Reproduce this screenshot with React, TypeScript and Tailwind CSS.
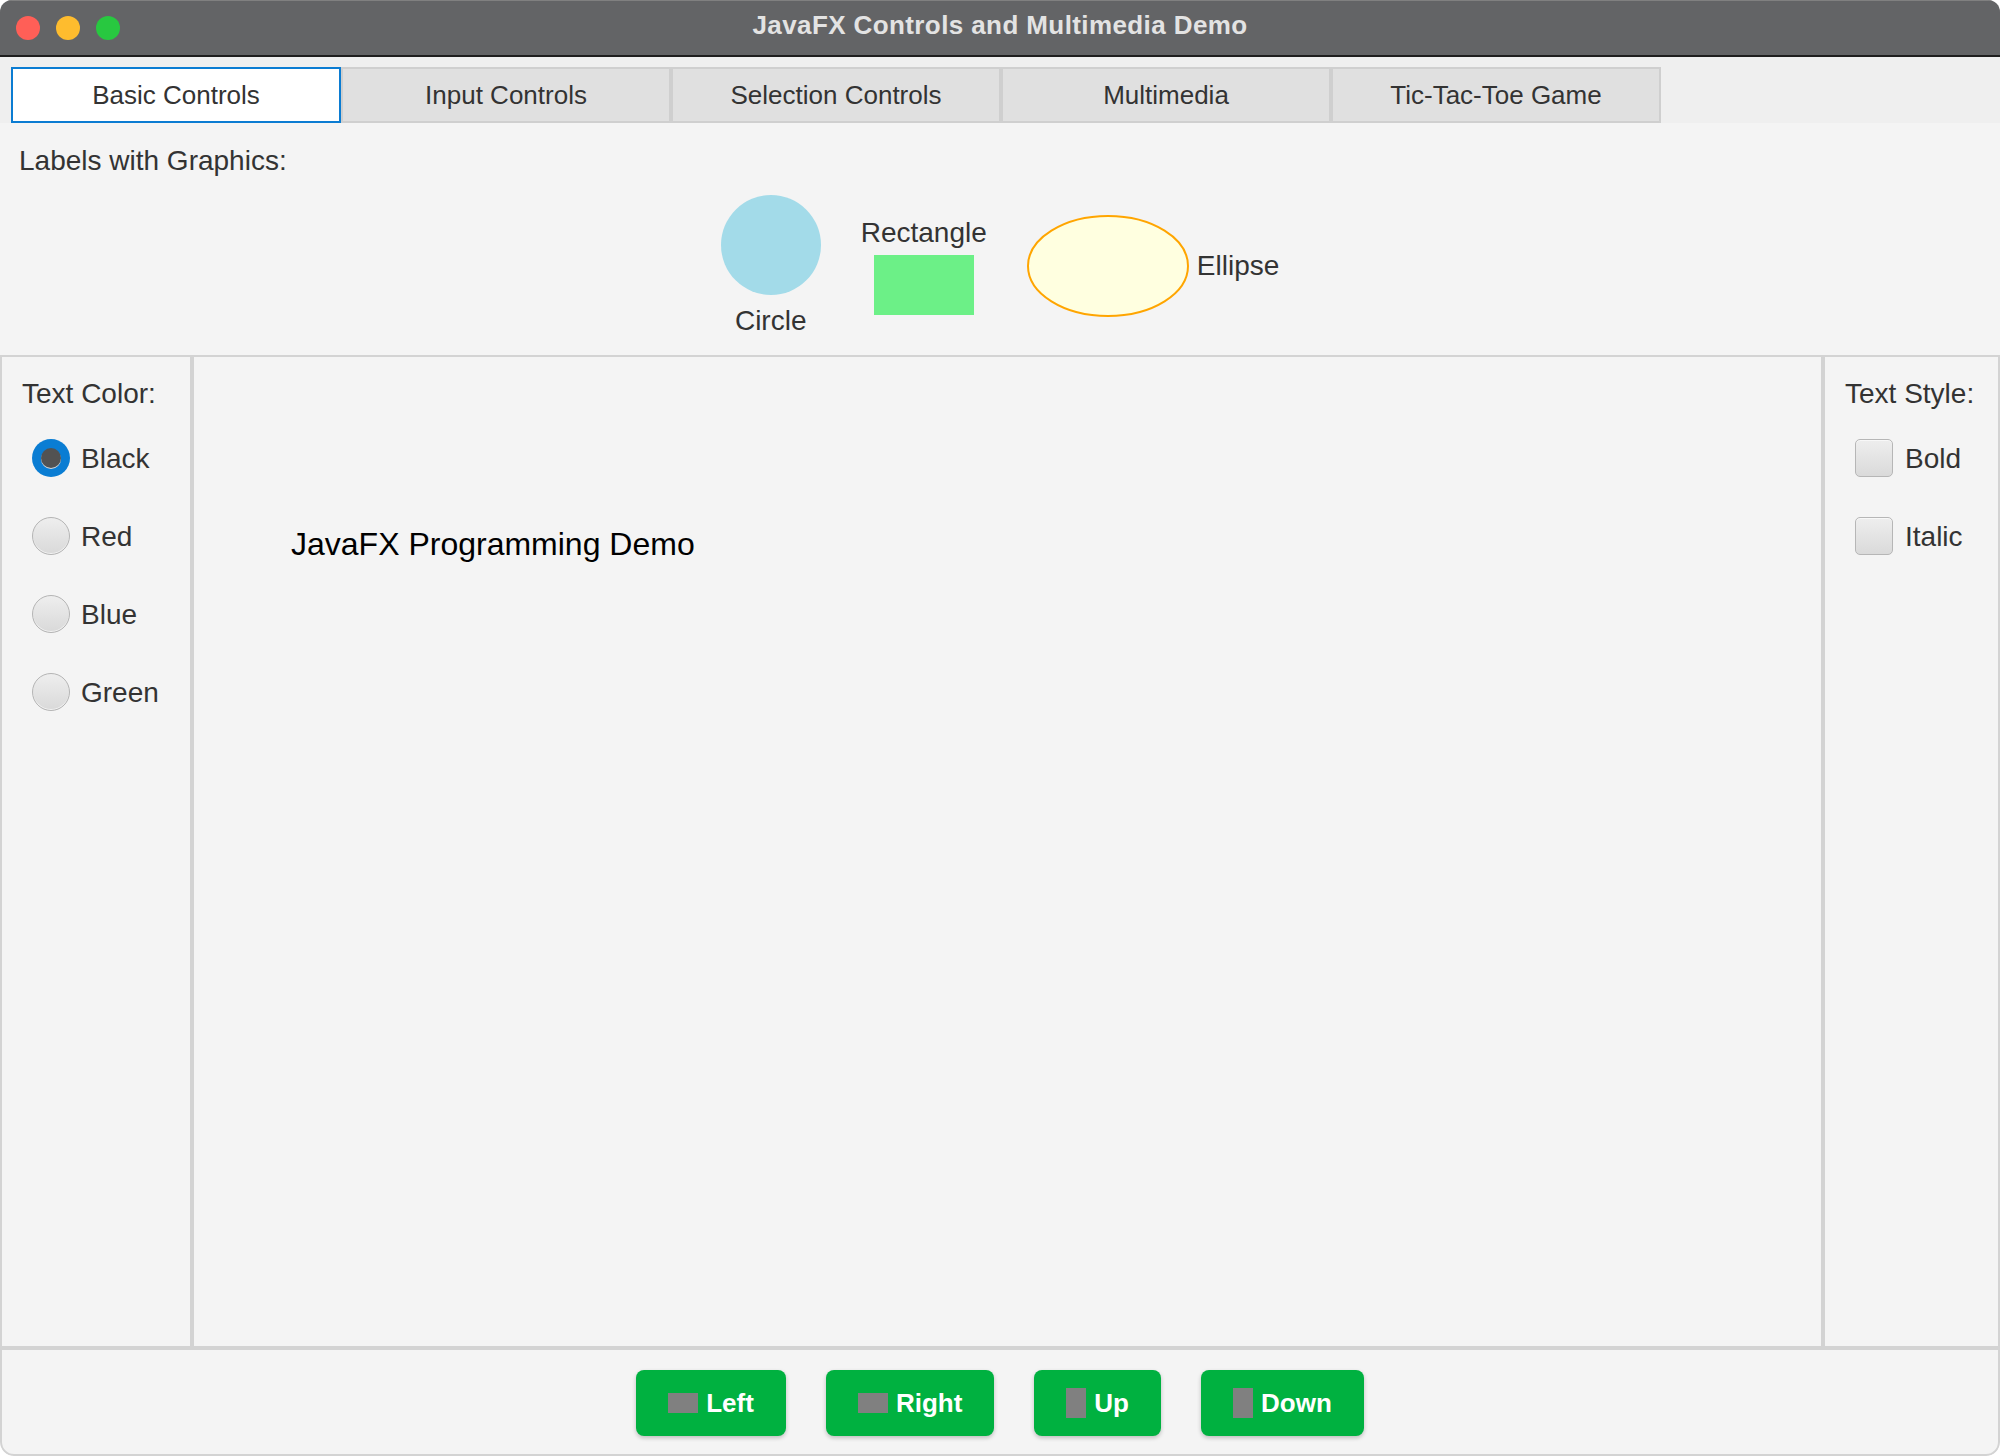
import React from "react";

const tabs = ["Basic Controls", "Input Controls", "Selection Controls", "Multimedia", "Tic-Tac-Toe Game"];

function Radio({ label, selected }: { label: string; selected?: boolean }) {
  return (
    <div className="flex h-[38px] items-center gap-[11px] pl-[10px]">
      {selected ? (
        <div className="flex h-[38px] w-[38px] shrink-0 items-center justify-center rounded-full bg-[#0a7dd3]">
          <div className="h-[20px] w-[20px] rounded-full bg-[#525252] shadow-[0_1px_0_#d8d8d8]" />
        </div>
      ) : (
        <div className="h-[38px] w-[38px] shrink-0 rounded-full border-[1.5px] border-[#b4b4b4] bg-linear-to-b from-[#eeeeee] to-[#d9d9d9] shadow-[inset_0_-1px_0_#f4f4f4]" />
      )}
      <span className="relative top-[1px] whitespace-nowrap text-[28px] leading-[32px] text-[#333333]">{label}</span>
    </div>
  );
}

function Check({ label }: { label: string }) {
  return (
    <div className="flex h-[38px] items-center gap-[12px] pl-[10px]">
      <div className="h-[38px] w-[38px] shrink-0 rounded-[5px] border-[1.5px] border-[#b6b6b6] bg-linear-to-b from-[#eeeeee] to-[#dadada] shadow-[inset_0_1px_0_#f8f8f8]" />
      <span className="relative top-[1px] whitespace-nowrap text-[28px] leading-[32px] text-[#333333]">{label}</span>
    </div>
  );
}

function Btn({ label, wide }: { label: string; wide: boolean }) {
  return (
    <div className="flex h-[66px] items-center gap-[8px] rounded-[8px] bg-[#00b140] px-[32px] shadow-[0_2px_4px_rgba(0,0,0,0.22)]">
      <div className={wide ? "h-[20px] w-[30px] bg-[#808080]" : "h-[30px] w-[20px] bg-[#808080]"} />
      <span className="text-[26px] font-bold leading-[30px] text-white">{label}</span>
    </div>
  );
}

export default function App() {
  return (
    <div className="h-[1456px] w-[2000px] bg-white font-['Liberation_Sans',Arial,sans-serif]">
      <div className="flex h-full w-full flex-col overflow-hidden rounded-t-[12px] rounded-b-[14px] bg-[#f4f4f4]">
        {/* Title bar */}
        <div className="relative flex h-[57px] shrink-0 items-center justify-center border-b-2 border-[#1e1e1e] bg-[#636466] pb-[6px] shadow-[inset_0_1px_0_#808080]">
          <div className="absolute left-[16px] top-[16px] flex gap-[16px]">
            <div className="h-[24px] w-[24px] rounded-full bg-[#ff5f57]" />
            <div className="h-[24px] w-[24px] rounded-full bg-[#febc2e]" />
            <div className="h-[24px] w-[24px] rounded-full bg-[#28c840]" />
          </div>
          <span className="text-[26px] font-bold leading-[30px] tracking-[0.4px] text-[#e3e3e3]">
            JavaFX Controls and Multimedia Demo
          </span>
        </div>

        {/* Tab header */}
        <div className="flex h-[66px] shrink-0 bg-[#efefef] pl-[11px] pt-[10px]">
          {tabs.map((t, i) => (
            <div
              key={t}
              className={
                i === 0
                  ? "flex h-[56px] w-[330px] items-center justify-center border-2 border-[#0b7cd2] bg-white text-[26px] leading-[30px] text-[#333333]"
                  : "flex h-[56px] w-[330px] items-center justify-center border-2 border-[#cfcfcf] bg-[#e0e0e0] text-[26px] leading-[30px] text-[#333333]"
              }
            >
              {t}
            </div>
          ))}
        </div>

        {/* Labels with graphics */}
        <div className="flex h-[232px] shrink-0 flex-col pt-[22px]">
          <div className="pl-[19px] text-[28px] leading-[32px] text-[#333333]">Labels with Graphics:</div>
          <div className="mt-[18px] flex items-center justify-center gap-[40px]">
            <div className="flex flex-col items-center gap-[10px]">
              <div className="h-[100px] w-[100px] rounded-full bg-[#a3dbe9]" />
              <span className="text-[28px] leading-[32px] text-[#333333]">Circle</span>
            </div>
            <div className="flex flex-col items-center gap-[6px]">
              <span className="text-[28px] leading-[32px] text-[#333333]">Rectangle</span>
              <div className="h-[60px] w-[100px] bg-[#6cf087]" />
            </div>
            <div className="flex items-center gap-[8px]">
              <svg width="162" height="102" viewBox="0 0 162 102">
                <ellipse cx="81" cy="51" rx="80" ry="50" fill="#ffffe0" stroke="#ffa500" strokeWidth="2" />
              </svg>
              <span className="text-[28px] leading-[32px] text-[#333333]">Ellipse</span>
            </div>
          </div>
        </div>

        {/* Middle */}
        <div className="flex h-[993px] shrink-0">
          <div className="flex w-[192px] shrink-0 flex-col border-2 border-[#d3d3d3] pl-[20px] pt-[21px]">
            <div className="whitespace-nowrap text-[28px] leading-[32px] text-[#333333]">Text Color:</div>
            <div className="mt-[29px] flex flex-col gap-[40px]">
              <Radio label="Black" selected />
              <Radio label="Red" />
              <Radio label="Blue" />
              <Radio label="Green" />
            </div>
          </div>
          <div className="flex-1 border-2 border-[#d3d3d3] pl-[97px] pt-[169px]">
            <div className="text-[32px] leading-[36px] text-black">JavaFX Programming Demo</div>
          </div>
          <div className="flex w-[177px] shrink-0 flex-col border-2 border-[#d3d3d3] pl-[20px] pt-[21px]">
            <div className="whitespace-nowrap text-[28px] leading-[32px] text-[#333333]">Text Style:</div>
            <div className="mt-[29px] flex flex-col gap-[40px]">
              <Check label="Bold" />
              <Check label="Italic" />
            </div>
          </div>
        </div>

        {/* Bottom buttons */}
        <div className="flex flex-1 items-center justify-center gap-[40px] rounded-b-[14px] border-2 border-[#d3d3d3] pt-[2px]">
          <Btn label="Left" wide />
          <Btn label="Right" wide />
          <Btn label="Up" wide={false} />
          <Btn label="Down" wide={false} />
        </div>
      </div>
    </div>
  );
}
